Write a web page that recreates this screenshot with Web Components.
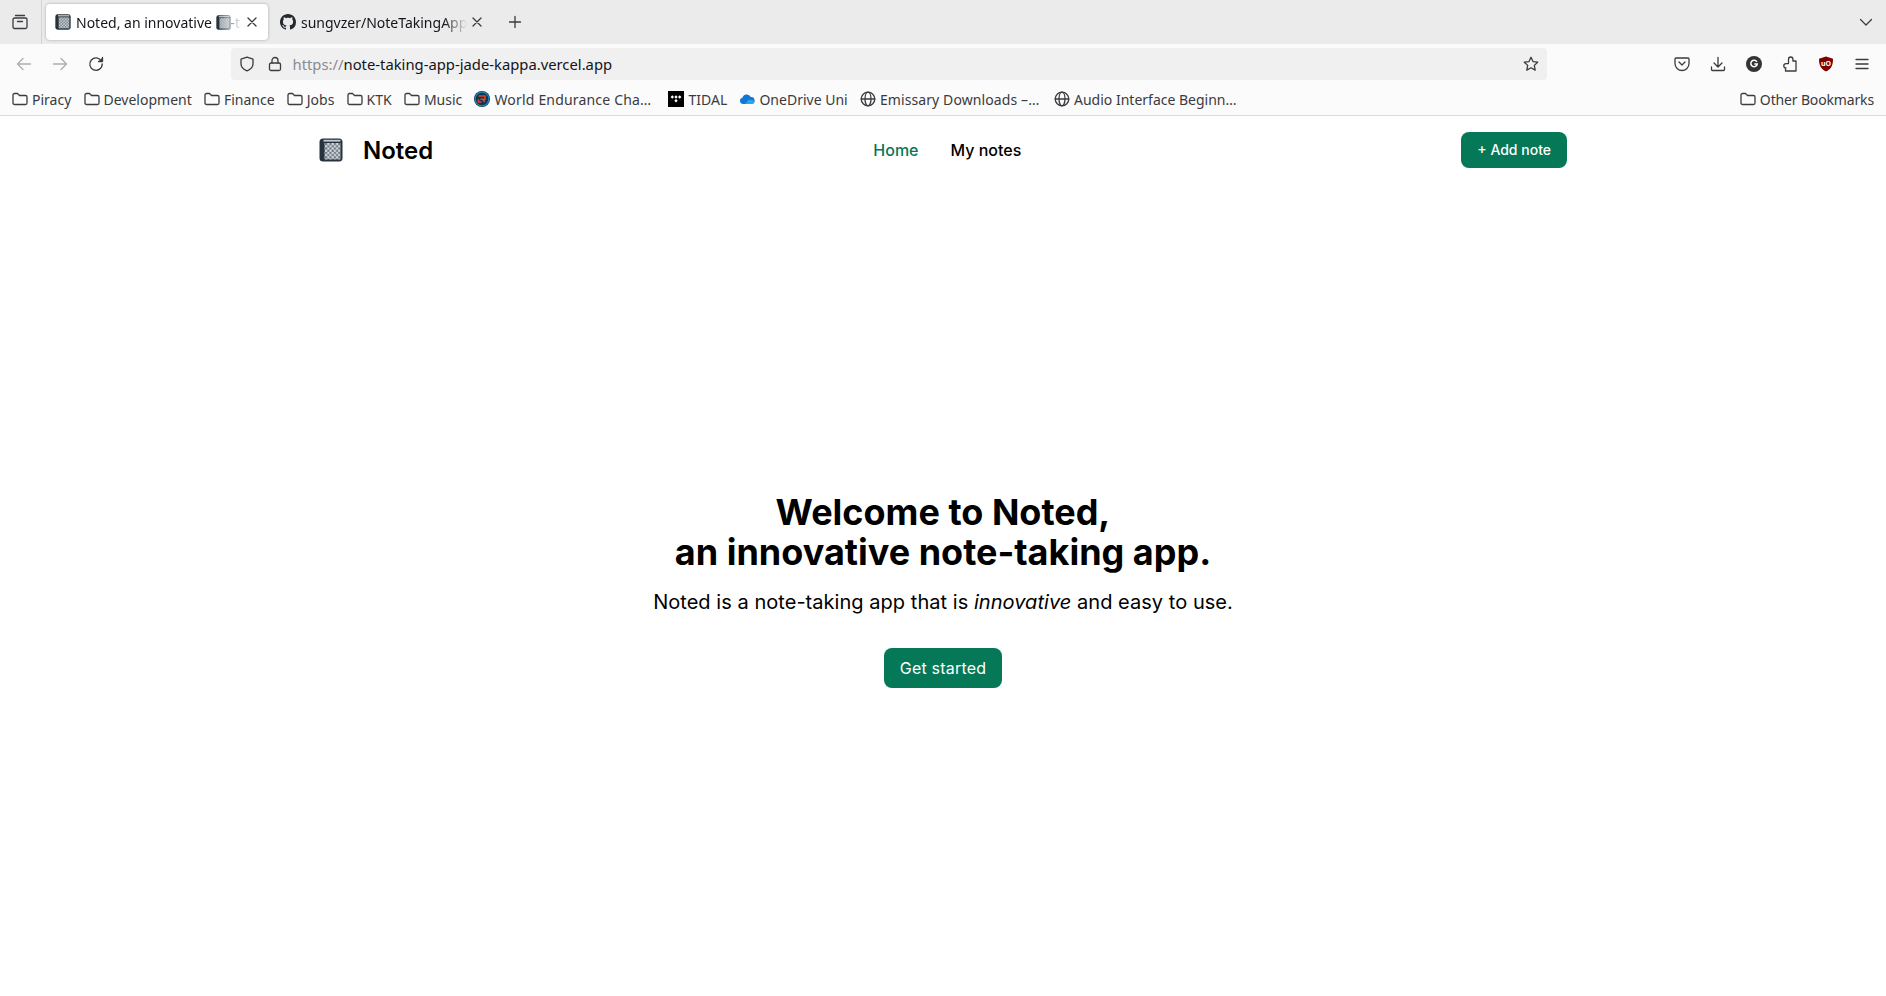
<!DOCTYPE html>
<html lang="en">
<head>
<meta charset="utf-8">
<title>Noted</title>
<style>
html, body{ margin: 0; padding: 0; background: #fff; }
body{ font-family: "Noto Sans", sans-serif; height: 996px; overflow: hidden; display: flex; flex-direction: column; }
</style>
</head>
<body>
<browser-tabs>
    <browser-tab active style="--tab-width:222px">
        <note-logo slot="icon" size="16"></note-logo>
        Noted, an innovative <note-logo size="15"></note-logo>-taking app
    </browser-tab>
    <browser-tab style="--tab-width:222px;margin-left:3px">
        <svg slot="icon" width="16" height="16" viewBox="0 0 16 16" fill="#24292f"><path d="M8 0C3.58 0 0 3.58 0 8c0 3.54 2.29 6.53 5.47 7.59.4.07.55-.17.55-.38 0-.19-.01-.82-.01-1.49-2.01.37-2.53-.49-2.69-.94-.09-.23-.48-.94-.82-1.13-.28-.15-.68-.52-.01-.53.63-.01 1.08.58 1.23.82.72 1.21 1.87.87 2.33.66.07-.52.28-.87.51-1.07-1.78-.2-3.64-.89-3.64-3.95 0-.87.31-1.59.82-2.15-.08-.2-.36-1.02.08-2.12 0 0 .67-.21 2.2.82.64-.18 1.32-.27 2-.27.68 0 1.36.09 2 .27 1.53-1.04 2.2-.82 2.2-.82.44 1.1.16 1.92.08 2.12.51.56.82 1.27.82 2.15 0 3.07-1.87 3.75-3.65 3.95.29.25.54.73.54 1.48 0 1.07-.01 1.93-.01 2.2 0 .21.15.46.55.38A8.013 8.013 0 0016 8c0-4.42-3.58-8-8-8z"/></svg>
        sungvzer/NoteTakingApp: A note
    </browser-tab>
</browser-tabs>
<browser-toolbar></browser-toolbar>
<bookmarks-bar>
    <bookmark-item folder>Piracy</bookmark-item>
    <bookmark-item folder>Development</bookmark-item>
    <bookmark-item folder>Finance</bookmark-item>
    <bookmark-item folder>Jobs</bookmark-item>
    <bookmark-item folder>KTK</bookmark-item>
    <bookmark-item folder>Music</bookmark-item>
    <bookmark-item style="letter-spacing:.18px">
        <svg slot="icon" width="16" height="16" viewBox="0 0 16 16"><circle cx="8" cy="8" r="8" fill="#0f3550"/><circle cx="8" cy="8" r="6.800" fill="none" stroke="#1f86b8" stroke-width="1.200"/><path d="M4.500 5h6.500v3.200H6.500M8.500 8.200l2.500 2.800M4.500 8.200V11h3" fill="none" stroke="#e0452c" stroke-width="1.500"/></svg>
        World Endurance Cha…
    </bookmark-item>
    <bookmark-item style="margin-left:5px">
        <svg slot="icon" width="16" height="16" viewBox="0 0 16 16"><rect width="16" height="16" fill="#000"/><path d="M4.300 4.300L6 6 4.300 7.700 2.600 6zM8 4.300L9.700 6 8 7.700 6.300 6zM11.700 4.300L13.400 6 11.700 7.700 10 6zM8 8L9.700 9.700 8 11.400 6.300 9.700z" fill="#fff"/></svg>
        TIDAL
    </bookmark-item>
    <bookmark-item>
        <svg slot="icon" width="16" height="16" viewBox="0 0 16 16"><path d="M4 13a3.200 3.200 0 0 1-.6-6.300A4.500 4.500 0 0 1 11.800 6a3.600 3.600 0 0 1 3.800 3.400A3.400 3.400 0 0 1 12.500 13z" fill="#0f78d4"/><path d="M6 13l4-4.600 5.600 1.400A3.300 3.300 0 0 1 12.500 13z" fill="#28a8ea"/></svg>
        OneDrive Uni
    </bookmark-item>
    <bookmark-item globe style="letter-spacing:.1px">Emissary Downloads –…</bookmark-item>
    <bookmark-item globe style="margin-left:2.500px">Audio Interface Beginn…</bookmark-item>
    <bookmark-item folder slot="end" style="letter-spacing:-.15px">Other Bookmarks</bookmark-item>
</bookmarks-bar>
<site-header></site-header>
<hero-section></hero-section>

<script>
;(function(document){
    'use strict';

    const stroke = 'fill="none" stroke="#3b3b40" stroke-width="1.3" stroke-linecap="round" stroke-linejoin="round"';

    customElements.define('note-logo', class extends HTMLElement{
        connectedCallback(){
            const size = this.getAttribute('size') || 24;
            const id = 'c' + size;
            this.attachShadow({ mode: 'open' }).innerHTML = `
                <style>
                :host{ display: inline-flex; vertical-align: -2px; }
                </style>
                <svg width="${size}" height="${size}" viewBox="0 0 24 24">
                    <defs>
                        <pattern id="${id}" x="6" y="5" width="4.400" height="4.400" patternUnits="userSpaceOnUse">
                            <rect width="4.400" height="4.400" fill="#d5dade"/>
                            <rect width="2.200" height="2.200" fill="#6b7883"/>
                            <rect x="2.200" y="2.200" width="2.200" height="2.200" fill="#6b7883"/>
                        </pattern>
                    </defs>
                    <rect x=".5" y=".5" width="23" height="23" rx="3.500" fill="#26333f"/>
                    <rect x="4.500" y="1.800" width="17" height="1.800" fill="#c5ccd3"/>
                    <rect x="5.500" y="5" width="16" height="16.500" fill="url(#${id})"/>
                </svg>
            `;
        }
    });

    customElements.define('browser-tabs', class extends HTMLElement{
        constructor(){
            super();
            this.attachShadow({ mode: 'open' }).innerHTML = `
                <style>
                :host{
                    display: flex;
                    align-items: center;
                    height: 44px;
                    flex: none;
                    background: #ebebeb;
                    box-sizing: border-box;
                }
                .all{
                    width: 42px;
                    height: 44px;
                    flex: none;
                    display: flex;
                    align-items: center;
                    justify-content: center;
                    box-sizing: border-box;
                    border-right: 1px solid #d4d4d4;
                    margin-right: 4px;
                    padding-right: 2px;
                }
                .new{
                    margin-left: 6px;
                    width: 32px;
                    display: flex;
                    justify-content: center;
                }
                .more{ margin-left: auto; margin-right: 12px; display: flex; }
                </style>
                <div class="all">
                    <svg width="16" height="16" viewBox="0 0 16 16" ${stroke}>
                        <path d="M3.500 1.500h9"/>
                        <rect x="1" y="4" width="14" height="10.500" rx="1.500"/>
                        <path d="M5.500 7.500h5"/>
                    </svg>
                </div>
                <slot></slot>
                <div class="new">
                    <svg width="14" height="14" viewBox="0 0 14 14" ${stroke}><path d="M7 1.500v11M1.500 7h11"/></svg>
                </div>
                <div class="more">
                    <svg width="16" height="16" viewBox="0 0 16 16" ${stroke}><path d="M2.500 5.500L8 11l5.500-5.500"/></svg>
                </div>
            `;
        }
    });

    customElements.define('browser-tab', class extends HTMLElement{
        constructor(){
            super();
            this.attachShadow({ mode: 'open' }).innerHTML = `
                <style>
                :host{
                    display: flex;
                    align-items: center;
                    box-sizing: border-box;
                    width: var(--tab-width, 200px);
                    height: 36px;
                    padding: 0 11px 0 9px;
                    gap: 5px;
                    border-radius: 4px;
                    font-size: 14px;
                    color: #15141a;
                    flex: none;
                }
                :host([active]){
                    background: #fff;
                    box-shadow: 0 0 3px rgba(0,0,0,.3);
                }
                .icon{ display: flex; flex: none; }
                .label{
                    flex: 1;
                    min-width: 0;
                    overflow: hidden;
                    white-space: nowrap;
                    -webkit-mask-image: linear-gradient(to right, #000 86%, transparent 100%);
                    mask-image: linear-gradient(to right, #000 86%, transparent 100%);
                }
                .close{ display: flex; flex: none; }
                </style>
                <span class="icon"><slot name="icon"></slot></span>
                <span class="label"><slot></slot></span>
                <span class="close">
                    <svg width="10" height="10" viewBox="0 0 10 10" ${stroke} stroke-width="1.100"><path d="M1 1l8 8M9 1l-8 8"/></svg>
                </span>
            `;
        }
    });

    customElements.define('browser-toolbar', class extends HTMLElement{
        constructor(){
            super();
            this.attachShadow({ mode: 'open' }).innerHTML = `
                <style>
                :host{
                    display: flex;
                    align-items: center;
                    flex: none;
                    height: 40px;
                    background: #fbfbfb;
                    font-size: 14.800px;
                    color: #15141a;
                    padding-left: 16px;
                    box-sizing: border-box;
                }
                .btn{ width: 16px; height: 16px; display: flex; flex: none; }
                .nav{ display: flex; gap: 20px; margin-right: 127px; }
                .dim{ opacity: .4; }
                .url{
                    width: 1316px;
                    height: 32px;
                    flex: none;
                    box-sizing: border-box;
                    display: flex;
                    align-items: center;
                    background: #f0f0f0;
                    border-radius: 4px;
                    padding: 0 8px;
                }
                .url .lock{ margin-left: 12px; margin-right: 9.500px; }
                .url .text{ flex: 1; white-space: nowrap; }
                .url .scheme{ color: #8a8a90; }
                .right{ display: flex; gap: 20px; margin-left: 127px; }
                </style>
                <div class="nav">
                    <svg class="btn dim" viewBox="0 0 16 16" ${stroke}><path d="M14.500 8h-13M7 2.500L1.500 8 7 13.500"/></svg>
                    <svg class="btn dim" viewBox="0 0 16 16" ${stroke}><path d="M1.500 8h13M9 2.500L14.500 8 9 13.500"/></svg>
                    <svg class="btn" viewBox="0 0 16 16" ${stroke}><path d="M13.500 5.200A6.200 6.200 0 1 0 14.200 8"/><path d="M14.500 1.500v4h-4" fill="#3b3b40"/></svg>
                </div>
                <div class="url">
                    <svg class="btn" viewBox="0 0 16 16" ${stroke}><path d="M8 1.200l6 2v4.600c0 3.300-2.600 5.800-6 7-3.400-1.200-6-3.700-6-7V3.200z"/></svg>
                    <svg class="btn lock" viewBox="0 0 16 16" ${stroke}><rect x="2.500" y="7" width="11" height="7.500" rx="1.500"/><path d="M5 7V4.500a3 3 0 0 1 6 0V7"/></svg>
                    <span class="text"><span class="scheme">https://</span>note-taking-app-jade-kappa.vercel.app</span>
                    <svg class="btn" viewBox="0 0 16 16" ${stroke}><path d="M8 1.300l2 4.300 4.700.6-3.400 3.200.9 4.700L8 11.800l-4.200 2.300.9-4.700L1.300 6.200 6 5.600z"/></svg>
                </div>
                <div class="right">
                    <svg class="btn" viewBox="0 0 16 16" ${stroke}><path d="M2 2h12a1 1 0 0 1 1 1v4.500a7 7 0 0 1-14 0V3a1 1 0 0 1 1-1z"/><path d="M5 6l3 3 3-3"/></svg>
                    <svg class="btn" viewBox="0 0 16 16" ${stroke}><path d="M8 1.500v9M4 7l4 4 4-4M1.500 11v2.500a1 1 0 0 0 1 1h11a1 1 0 0 0 1-1V11"/></svg>
                    <svg class="btn" viewBox="0 0 16 16"><circle cx="8" cy="8" r="8" fill="#333"/><path d="M10.800 5.800A3.200 3.200 0 1 0 11.200 8H8.300" fill="none" stroke="#fff" stroke-width="1.500"/></svg>
                    <svg class="btn" viewBox="0 0 16 16" ${stroke}><path d="M6.500 5V3.200a2.200 2.200 0 0 1 4.400 0V5h3.100v10H3.500v-3H4a2.200 2.200 0 0 1 0-4.400h2.500z"/></svg>
                    <svg class="btn" viewBox="0 0 16 16"><path d="M8 .5l7 2.200c0 6-1.500 10.300-7 12.800C2.500 13 1 8.700 1 2.700z" fill="#800000"/><text x="8" y="10" font-size="7" font-weight="700" text-anchor="middle" fill="#fff" font-family="Noto Sans">uO</text></svg>
                    <svg class="btn" viewBox="0 0 16 16" ${stroke}><path d="M2 3.500h12M2 8h12M2 12.500h12"/></svg>
                </div>
            `;
        }
    });

    customElements.define('bookmarks-bar', class extends HTMLElement{
        constructor(){
            super();
            this.attachShadow({ mode: 'open' }).innerHTML = `
                <style>
                :host{
                    display: flex;
                    align-items: center;
                    flex: none;
                    height: 32px;
                    box-sizing: border-box;
                    background: #fbfbfb;
                    border-bottom: 1px solid #dcdcdc;
                    padding: 0 12px 1px;
                    gap: 12.200px;
                }
                .end{ margin-left: auto; display: flex; }
                </style>
                <slot></slot>
                <div class="end"><slot name="end"></slot></div>
            `;
        }
    });

    customElements.define('bookmark-item', class extends HTMLElement{
        constructor(){
            super();
            const folder = this.hasAttribute('folder');
            const globe = this.hasAttribute('globe');
            let icon = '';
            if(folder){
                icon = `<svg width="16" height="16" viewBox="0 0 16 16" ${stroke}><path d="M1 4a1.500 1.500 0 0 1 1.500-1.500h3L7.500 4.500h6A1.500 1.500 0 0 1 15 6v6a1.500 1.500 0 0 1-1.500 1.500h-11A1.500 1.500 0 0 1 1 12z"/></svg>`;
            }else if(globe){
                icon = `<svg width="16" height="16" viewBox="0 0 16 16" ${stroke}><circle cx="8" cy="8" r="6.800"/><ellipse cx="8" cy="8" rx="3" ry="6.800"/><path d="M1.200 8h13.600"/></svg>`;
            }
            this.attachShadow({ mode: 'open' }).innerHTML = `
                <style>
                :host{
                    display: flex;
                    align-items: center;
                    gap: 4px;
                    font-size: 14px;
                    color: #3a3a3f;
                    white-space: nowrap;
                    flex: none;
                }
                .icon{ display: flex; }
                </style>
                <span class="icon"><slot name="icon">${icon}</slot></span>
                <slot></slot>
            `;
        }
    });

    customElements.define('site-header', class extends HTMLElement{
        constructor(){
            super();
            this.attachShadow({ mode: 'open' }).innerHTML = `
                <style>
                :host{
                    display: block;
                    flex: none;
                    font-family: Inter, sans-serif;
                }
                nav{
                    width: 1280px;
                    margin: 0 auto;
                    box-sizing: border-box;
                    padding: 16px 16px 15px;
                    display: flex;
                    justify-content: space-between;
                    align-items: center;
                }
                .brand{
                    display: flex;
                    align-items: center;
                    gap: 20px;
                    font-size: 24px;
                    font-weight: 600;
                    color: #000;
                }
                .links{ display: flex; gap: 32px; font-size: 16px; font-weight: 500; color: #000; }
                .links a{ color: inherit; text-decoration: none; }
                .links a.active{ color: #047857; }
                .add{
                    background: #047857;
                    color: #fff;
                    font-size: 14px;
                    font-weight: 500;
                    line-height: 20px;
                    padding: 8px 16px;
                    border-radius: 8px;
                }
                </style>
                <nav>
                    <div class="brand"><note-logo size="24"></note-logo><span>Noted</span></div>
                    <div class="links"><a class="active" href="#">Home</a><a href="#">My notes</a></div>
                    <div class="add">+ Add note</div>
                </nav>
            `;
        }
    });

    customElements.define('hero-section', class extends HTMLElement{
        constructor(){
            super();
            this.attachShadow({ mode: 'open' }).innerHTML = `
                <style>
                :host{
                    display: flex;
                    flex-direction: column;
                    align-items: center;
                    flex: 1;
                    padding-top: 309px;
                    font-family: Inter, sans-serif;
                    color: #000;
                    text-align: center;
                }
                h1{
                    margin: 0;
                    font-size: 36px;
                    line-height: 40px;
                    font-weight: 700;
                }
                p{
                    margin: 16px 0 0;
                    font-size: 20px;
                    line-height: 28px;
                    letter-spacing: .04px;
                }
                .cta{
                    margin-top: 32px;
                    background: #047857;
                    color: #fff;
                    font-size: 16px;
                    font-weight: 400;
                    line-height: 24px;
                    letter-spacing: .2px;
                    padding: 8px 16px;
                    border-radius: 8px;
                }
                </style>
                <h1>Welcome to Noted,<br>an innovative note-taking app.</h1>
                <p>Noted is a note-taking app that is <em>innovative</em> and easy to use.</p>
                <div class="cta">Get started</div>
            `;
        }
    });

})(document);
</script>
</body>
</html>
